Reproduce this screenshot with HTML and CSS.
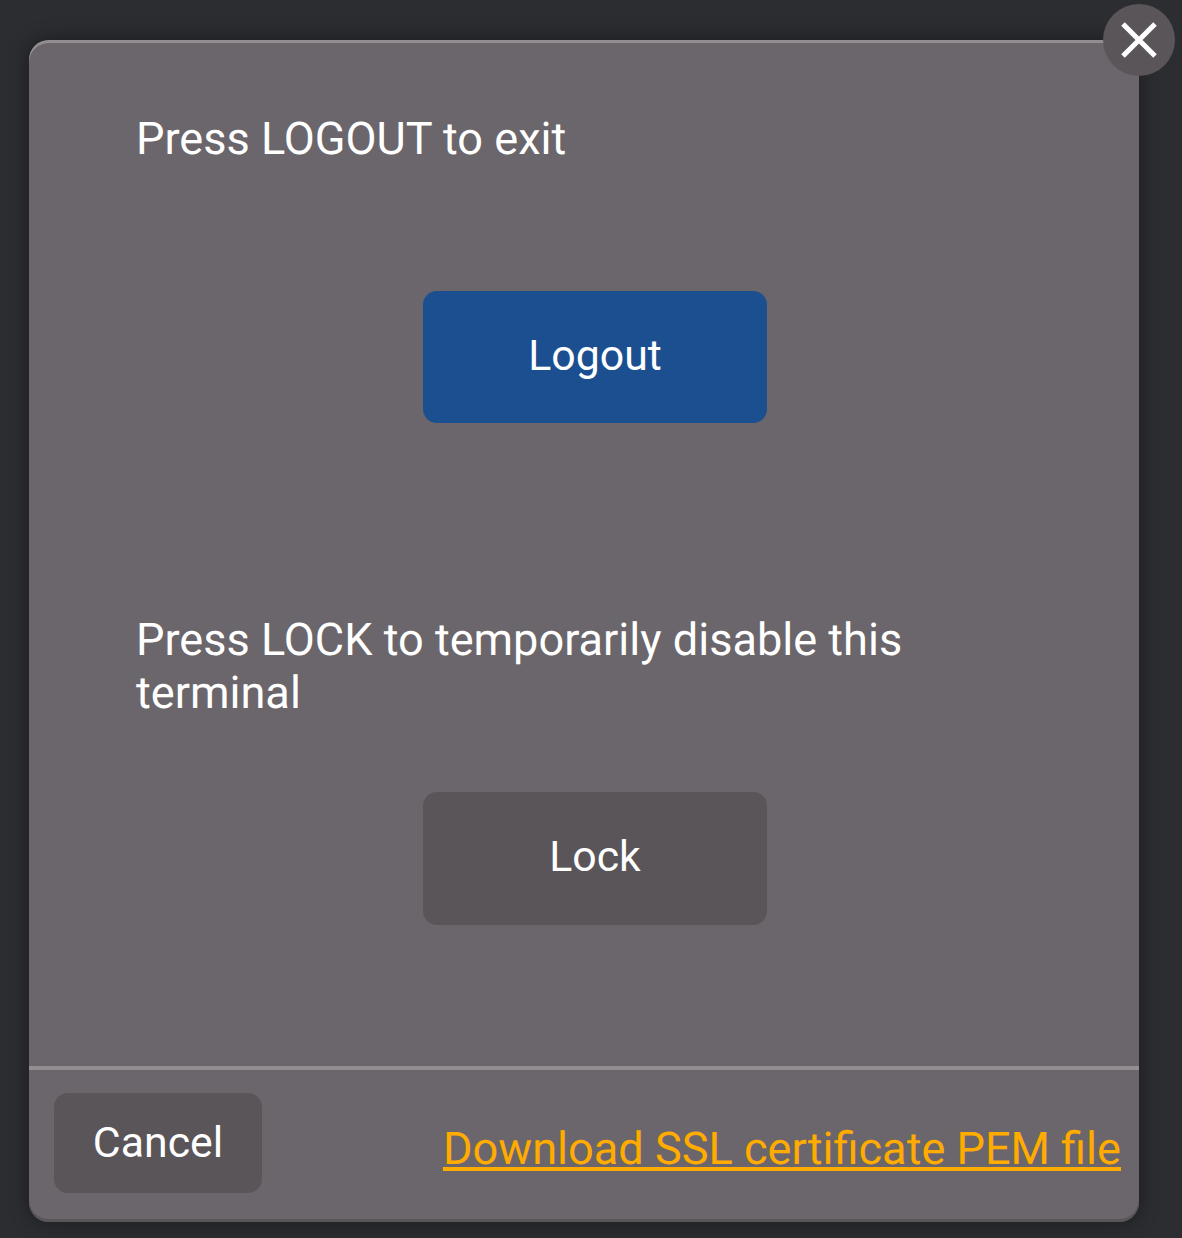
FILE: index.html
```html
<!DOCTYPE html>
<html lang="en">
<head>
    <meta charset="UTF-8">
    <title>Logout</title>
    <link rel="stylesheet" href="styles.css">
</head>
<body>
    <div class="dialog">
        <button class="close" aria-label="Close">
            <svg width="36" height="36" viewBox="0 0 36 36">
                <path d="M2 2L34 34M34 2L2 34" stroke="#fff" stroke-width="5" fill="none"/>
            </svg>
        </button>
        <div class="content">
            <p class="message">Press LOGOUT to exit</p>
            <button class="btn btn-primary logout">Logout</button>
            <p class="message lock-message">Press LOCK to temporarily disable this terminal</p>
            <button class="btn lock">Lock</button>
        </div>
        <div class="footer">
            <button class="btn cancel">Cancel</button>
            <a class="download" href="#">Download SSL certificate PEM file</a>
        </div>
    </div>
</body>
</html>
```

FILE: styles.css
```css
* {
    box-sizing: border-box;
}
html, body {
    margin: 0;
    height: 100%;
}
body {
    background-color: #2c2d31;
    font-family: Roboto, "Liberation Sans", sans-serif;
    font-size: 45.1px;
    line-height: 53px;
    color: #fff;
    padding: 40px 43px 16px 29px;
    text-rendering: geometricPrecision;
}
.dialog {
    position: relative;
    display: flex;
    flex-direction: column;
    height: 1182px;
    background-color: #6b666b;
    border-radius: 20px;
    box-shadow: inset 0 3px 0 #918d91, inset 0 -3px 0 #595558, 0 0 20px rgba(0, 0, 0, 0.4);
}
.close {
    position: absolute;
    top: -36px;
    right: -36px;
    width: 72px;
    height: 72px;
    padding: 0;
    border: none;
    border-radius: 50%;
    background-color: #5a5559;
    display: flex;
    align-items: center;
    justify-content: center;
}
.content {
    flex: 1;
    display: flex;
    flex-direction: column;
    padding: 73px 86px 0 107px;
}
.message {
    margin: 0;
}
.lock-message {
    margin-top: 191px;
}
.btn {
    border: none;
    color: #fff;
    font: inherit;
    font-size: 42.8px;
    background-color: #5a5559;
    border-radius: 14px;
}
.btn-primary {
    background-color: #1c4f90;
}
.logout, .lock {
    align-self: center;
    width: 344px;
    margin-right: -1px;
}
.logout {
    margin-top: 125px;
    height: 132px;
    padding: 0 0 4px;
}
.lock {
    margin-top: 72px;
    height: 133px;
    padding: 0 0 5px;
}
.footer {
    display: flex;
    justify-content: space-between;
    height: 156px;
    padding: 23px 18px 0 25px;
    border-top: 4px solid #918d91;
}
.cancel {
    width: 208px;
    height: 100px;
    padding: 0 0 2px;
}
.download {
    color: #ffab00;
    margin-top: 30px;
}
```
